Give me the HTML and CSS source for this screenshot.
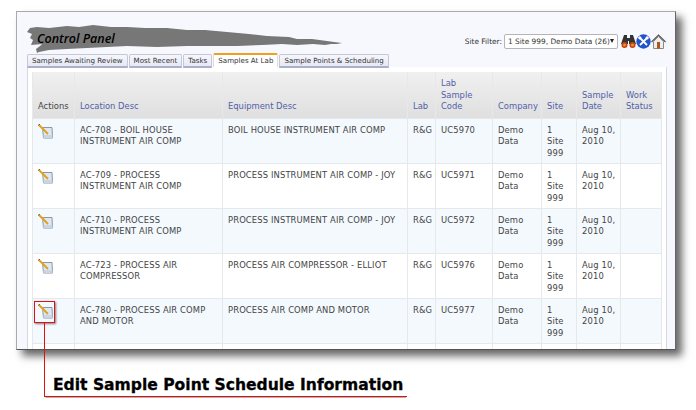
FILE: index.html
```html
<!DOCTYPE html>
<html lang="en">
<head>
  <meta charset="UTF-8">
  <title>Control Panel</title>
  <link rel="stylesheet" href="styles.css">
</head>
<body>
  <div class="window">
    <div class="top">
      <svg class="brush" width="316" height="28" viewBox="0 0 316 28">
        <polygon fill="#777" points="0,7 3,3 10,2 22,3 40,1 52,2 66,0 84,2 100,2 118,3 140,3 160,5 178,5 200,7 222,9 240,11 262,12 270,14 285,14 300,16 307,17 315,18 310,19 304,19 298,20 286,19 270,20 255,19 235,20 210,21 190,21 160,21 130,22 100,21 80,22 60,23 40,24 22,25 12,27 10,28 9,24 13,21 15,19 4,20 6,15 3,13 5,9"/>
      </svg>
      <h1 class="title">Control Panel</h1>
      <div class="filter">
        <span class="filter-label">Site Filter:</span>
        <span class="select">1 Site 999, Demo Data (26)<i class="arrow"></i></span>
        <svg class="tool" width="15" height="15" viewBox="0 0 15 15">
          <path fill="#333" d="M3 1h3v3h3V1h3l3 9H8V7H7v3H0z"/>
          <circle cx="3.500" cy="11" r="3" fill="#c2410c"/>
          <circle cx="11.500" cy="11" r="3" fill="#c2410c"/>
          <circle cx="3.500" cy="11" r="1.500" fill="#ea8a3c"/>
          <circle cx="11.500" cy="11" r="1.500" fill="#ea8a3c"/>
        </svg>
        <svg class="tool" width="15" height="15" viewBox="0 0 15 15">
          <circle cx="7.500" cy="7.500" r="7.200" fill="#2255cc"/>
          <path stroke="#fff" stroke-width="1.800" d="M4 4l7 7M11 4l-7 7"/>
          <circle cx="3.800" cy="3.800" r="1.600" fill="#fff"/>
          <circle cx="11.200" cy="3.800" r="1.600" fill="#fff"/>
        </svg>
        <svg class="tool" width="15" height="15" viewBox="0 0 15 15">
          <path fill="none" stroke="#555" stroke-width="1.200" d="M.5 8L7.500 1l7 7"/>
          <path fill="#eee" stroke="#888" d="M2.500 7.500v7h10v-7l-5-5z"/>
          <rect x="6" y="8" width="3" height="6.500" fill="#a8581c"/>
        </svg>
      </div>
    </div>

    <div class="tabs">
      <span class="tab">Samples Awaiting Review</span>
      <span class="tab">Most Recent</span>
      <span class="tab">Tasks</span>
      <span class="tab active">Samples At Lab</span>
      <span class="tab">Sample Points &amp; Scheduling</span>
    </div>

    <div class="panel">
      <table class="grid">
        <colgroup>
          <col class="c-actions"><col class="c-loc"><col class="c-equip"><col class="c-lab">
          <col class="c-code"><col class="c-company"><col class="c-site"><col class="c-date"><col class="c-status">
        </colgroup>
        <thead>
          <tr>
            <th class="plain">Actions</th>
            <th>Location Desc</th>
            <th>Equipment Desc</th>
            <th>Lab</th>
            <th>Lab Sample Code</th>
            <th>Company</th>
            <th>Site</th>
            <th>Sample Date</th>
            <th>Work Status</th>
          </tr>
        </thead>
        <tbody>
          <tr>
            <td><svg class="note" width="16" height="15" viewBox="0 0 16 15"><use href="#note-icon"/></svg></td>
            <td class="loc">AC-708 - BOIL HOUSE INSTRUMENT AIR COMP</td>
            <td>BOIL HOUSE INSTRUMENT AIR COMP</td>
            <td>R&amp;G</td><td>UC5970</td><td>Demo Data</td><td>1 Site 999</td><td class="date">Aug 10, 2010</td><td></td>
          </tr>
          <tr>
            <td><svg class="note" width="16" height="15" viewBox="0 0 16 15"><use href="#note-icon"/></svg></td>
            <td class="loc">AC-709 - PROCESS INSTRUMENT AIR COMP</td>
            <td>PROCESS INSTRUMENT AIR COMP - JOY</td>
            <td>R&amp;G</td><td>UC5971</td><td>Demo Data</td><td>1 Site 999</td><td class="date">Aug 10, 2010</td><td></td>
          </tr>
          <tr>
            <td><svg class="note" width="16" height="15" viewBox="0 0 16 15"><use href="#note-icon"/></svg></td>
            <td class="loc">AC-710 - PROCESS INSTRUMENT AIR COMP</td>
            <td>PROCESS INSTRUMENT AIR COMP - JOY</td>
            <td>R&amp;G</td><td>UC5972</td><td>Demo Data</td><td>1 Site 999</td><td class="date">Aug 10, 2010</td><td></td>
          </tr>
          <tr>
            <td><svg class="note" width="16" height="15" viewBox="0 0 16 15"><use href="#note-icon"/></svg></td>
            <td class="loc">AC-723 - PROCESS AIR COMPRESSOR</td>
            <td>PROCESS AIR COMPRESSOR - ELLIOT</td>
            <td>R&amp;G</td><td>UC5976</td><td>Demo Data</td><td>1 Site 999</td><td class="date">Aug 10, 2010</td><td></td>
          </tr>
          <tr>
            <td><svg class="note" width="16" height="15" viewBox="0 0 16 15"><use href="#note-icon"/></svg></td>
            <td class="loc">AC-780 - PROCESS AIR COMP AND MOTOR</td>
            <td>PROCESS AIR COMP AND MOTOR</td>
            <td>R&amp;G</td><td>UC5977</td><td>Demo Data</td><td>1 Site 999</td><td class="date">Aug 10, 2010</td><td></td>
          </tr>
          <tr>
            <td></td><td></td><td></td><td></td><td></td><td></td><td></td><td></td><td></td>
          </tr>
        </tbody>
      </table>
    </div>
  </div>

  <!-- annotation on top of the screenshot -->
  <div class="mark"></div>
  <div class="leader"></div>
  <div class="caption">Edit Sample Point Schedule Information</div>

  <svg class="defs" width="0" height="0">
    <symbol id="note-icon" viewBox="0 0 16 15">
      <path fill="#dfe8f2" stroke="#8a97a6" d="M4.500 3.500h9.500l.5 10.500H5.500z"/>
      <path fill="#c8d6e4" d="M5.500 11h8.800l.2 3h-9z"/>
      <path stroke="#e0a21c" stroke-width="2" d="M1 1l9 9"/>
      <path stroke="#7a5a20" stroke-width="1" d="M0 1.500l2-1.500"/>
    </symbol>
  </svg>
</body>
</html>
```

FILE: styles.css
```css
html, body {
  height: 100%;
}
body {
  margin: 0;
  background: #fff;
  font-family: "DejaVu Sans", sans-serif;
  overflow: hidden;
  padding: 11px 0 0 16px;
  box-sizing: border-box;
}
.window {
  width: 660px;
  height: 339px;
  box-sizing: border-box;
  background: #f7f8fe;
  border: 1px solid #aaa;
  border-bottom: 1px solid #555;
  border-right: 1px solid #666;
  box-shadow: 6px 6px 8px rgba(0,0,0,0.6);
  padding: 0 8px 0 10px;
  overflow: hidden;
}
.top {
  position: relative;
  height: 42px;
  display: flex;
  align-items: flex-end;
}
.brush {
  position: absolute;
  left: 0;
  top: 13px;
}
.title {
  position: relative;
  margin: 0 0 7px 10px;
  font: italic 600 12.5px "Open Sans", sans-serif;
  color: #000;
}
.filter {
  margin-left: auto;
  margin-right: 1px;
  display: flex;
  align-items: center;
  height: 20px;
  font-size: 7.4px;
  color: #333;
  position: relative;
  top: -3px;
}
.filter-label {
  margin-right: 2px;
}
.select {
  display: flex;
  align-items: center;
  justify-content: space-between;
  width: 114px;
  height: 15px;
  box-sizing: border-box;
  padding: 0 5px 0 3px;
  margin-right: 3px;
  background: #fff;
  border: 1px solid #b5b5b5;
  border-radius: 2px;
  white-space: nowrap;
}
.arrow {
  border-top: 4px solid #222;
  border-left: 2px solid transparent;
  border-right: 2px solid transparent;
}
.tabs {
  display: flex;
  gap: 1px;
  height: 13px;
  position: relative;
}
.tab {
  height: 11px;
  padding: 0 4px;
  font-size: 7.1px;
  line-height: 11px;
  color: #333;
  background: linear-gradient(#f6f7fc, #e6e8f6);
  border: 1px solid #c5c9d6;
  border-bottom: 2px solid #aab0c8;
  border-radius: 2px 2px 0 0;
  white-space: nowrap;
}
.tab.active {
  background: #fff;
  border-color: #ddd;
  border-top: 2px solid #f0a020;
  border-bottom: 0;
  height: 12px;
  margin-top: -1px;
  position: relative;
  z-index: 1;
}
.panel {
  background: #fff;
  border-left: 1px solid #d5d8e0;
  border-right: 1px solid #d5d8e0;
  height: 290px;
  padding: 5px 5px 0 4px;
}
.grid {
  table-layout: fixed;
  border-collapse: collapse;
  width: 629px;
  font-size: 8.4px;
  line-height: 11.5px;
  color: #444;
}
.c-actions { width: 42px; }
.c-loc { width: 148px; }
.c-equip { width: 185px; }
.c-lab { width: 28px; }
.c-code { width: 57px; }
.c-company { width: 49px; }
.c-site { width: 35px; }
.c-date { width: 44px; }
.c-status { width: 41px; }
.grid th {
  height: 46px;
  box-sizing: border-box;
  padding: 0 5px 5px;
  vertical-align: bottom;
  text-align: left;
  font-weight: normal;
  color: #5060a8;
  background: linear-gradient(#f0f0f0, #dfdfdf);
  border: 1px solid #e8e8e8;
  border-width: 0 1px;
}
.grid th.plain {
  color: #444;
}
.grid td {
  height: 45px;
  box-sizing: border-box;
  padding: 6px 5px 0;
  vertical-align: top;
  letter-spacing: 0.13px;
  border: 1px solid #e6e9ec;
}
.grid td.loc {
  padding-right: 14px;
}
.grid td.date {
  padding-right: 0;
}
.grid tbody tr:nth-child(odd) {
  background: #f4f9fe;
}
.note {
  display: block;
  margin-top: -1px;
}
.mark {
  position: absolute;
  left: 34px;
  top: 301px;
  width: 19px;
  height: 20px;
  border: 1px solid #e01010;
  box-shadow: 1px 1px 2px rgba(0,0,0,0.5);
}
.leader {
  position: absolute;
  left: 44px;
  top: 323px;
  width: 362px;
  height: 73px;
  border-left: 1px solid #e01010;
  border-bottom: 1px solid #e01010;
  box-shadow: -1px 1px 1px -0.5px rgba(0,0,0,0.3);
}
.caption {
  position: absolute;
  left: 53px;
  top: 376px;
  font-size: 15.55px;
  line-height: 18px;
  font-weight: bold;
  color: #000;
  white-space: nowrap;
  -webkit-text-stroke: 0.3px #000;
}
.defs {
  position: absolute;
}
```
